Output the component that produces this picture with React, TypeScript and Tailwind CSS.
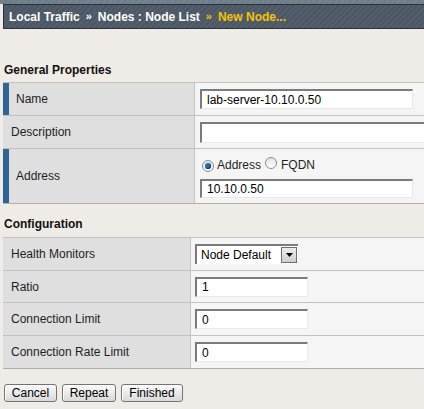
import React from "react";

// инпут в стиле старого BIG-IP: вдавленная рамка сверху/слева
const Field = ({ value, w, h = 20 }: { value: string; w: string; h?: number }) => (
  <input
    readOnly
    value={value}
    style={{ height: h }}
    className={`${w} shrink-0 bg-white border-t-2 border-l-2 border-t-[#7b7b7b] border-l-[#7b7b7b] border-r border-b border-r-[#e9e9e9] border-b-[#e9e9e9] pl-[5px] text-[12px] text-black outline-none font-['Liberation_Sans',Arial,sans-serif]`}
  />
);

const Radio = ({ checked }: { checked?: boolean }) => (
  <span className="relative inline-flex h-[12px] w-[12px] shrink-0 items-center justify-center rounded-full border border-[#8c8c8c] bg-linear-to-b from-[#e4e4e4] to-[#ffffff]">
    {checked && (
      <span className="h-[6px] w-[6px] rounded-full bg-[#1f6fb8] shadow-[inset_-1px_-1px_1px_#0c3f72]" />
    )}
  </span>
);

const Label = ({ text, bar }: { text: string; bar?: boolean }) => (
  <div className="flex h-full items-center border-r border-[#c3c3c3] bg-[#dfdfdf]">
    {bar ? <div className="h-full w-[6px] bg-[#2f6497]" /> : null}
    <span className={`text-[12px] text-[#1e1e1e] ${bar ? "pl-[7px]" : "pl-[8px]"}`}>{text}</span>
  </div>
);

const Btn = ({ text, w }: { text: string; w: string }) => (
  <button
    type="button"
    className={`${w} h-[18px] rounded-[3px] border border-[#747474] bg-linear-to-b from-[#fbfbfb] to-[#d9d9d9] shadow-[inset_1px_1px_0_#ffffff] text-[12px] leading-none text-black`}
  >
    {text}
  </button>
);

export default function App() {
  return (
    <div className="h-[409px] w-[424px] overflow-hidden bg-[#efebe7] font-['Liberation_Sans',Arial,sans-serif]">
      {/* шапка с хлебными крошками */}
      <div className="h-[4px] bg-[repeating-linear-gradient(135deg,#6d7c88_0px,#6d7c88_2px,#75848f_2px,#75848f_4px)]" />
      <div className="ml-[3px] flex h-[25px] items-center border border-r-0 border-[#2c3038] bg-[repeating-linear-gradient(135deg,#4c5765_0px,#4c5765_2px,#535f6c_2px,#535f6c_4px)] pl-[5px] text-[12px] font-bold">
        <span className="text-white">Local Traffic</span>
        <span className="mx-[6px] text-[11px] text-white">»</span>
        <span className="text-white">Nodes : Node List</span>
        <span className="mx-[6px] text-[11px] text-[#f6c400]">»</span>
        <span className="text-[#f6c400]">New Node...</span>
      </div>

      {/* General Properties */}
      <div className="flex h-[53px] items-end pb-[3px] pl-[4px] text-[12px] font-bold text-[#111]">General Properties</div>
      <div className="ml-[3px] border-t border-[#c3c3c3]">
        <div className="grid h-[33px] grid-cols-[192px_1fr] border-b border-[#c3c3c3]">
          <Label text="Name" bar />
          <div className="flex items-center overflow-hidden bg-[#f5f5f5] pl-[5px]">
            <Field value="lab-server-10.10.0.50" w="w-[213px]" />
          </div>
        </div>
        <div className="grid h-[33px] grid-cols-[192px_1fr] border-b border-[#c3c3c3]">
          <Label text="Description" />
          <div className="flex items-center overflow-hidden bg-[#f5f5f5] pl-[5px]">
            <Field value="" w="w-[240px]" h={21} />
          </div>
        </div>
        <div className="grid h-[55px] grid-cols-[192px_1fr] border-b border-[#aeaeae]">
          <Label text="Address" bar />
          <div className="flex flex-col overflow-hidden bg-[#f5f5f5] pl-[5px] pt-[9px]">
            <div className="flex h-[13px] items-center text-[12px] text-[#1e1e1e]">
              <span className="ml-[2px]"><Radio checked /></span>
              <span className="ml-[3px]">Address</span>
              <span className="ml-[4px]"><Radio /></span>
              <span className="ml-[4px]">FQDN</span>
            </div>
            <div className="mt-[5px]">
              <Field value="10.10.0.50" w="w-[213px]" h={19} />
            </div>
          </div>
        </div>
      </div>

      {/* Configuration */}
      <div className="flex h-[33px] items-end pb-[4px] pl-[4px] text-[12px] font-bold text-[#111]">Configuration</div>
      <div className="ml-[3px] border-t border-[#c3c3c3]">
        <div className="grid h-[33px] grid-cols-[188px_1fr] border-b border-[#c3c3c3]">
          <Label text="Health Monitors" />
          <div className="flex items-center bg-[#f5f5f5] pl-[4px]">
            <div className="flex h-[20px] w-[103px] items-center justify-between border-t-2 border-l-2 border-t-[#7b7b7b] border-l-[#7b7b7b] bg-white pl-[4px] pr-[1px] text-[12px] text-black">
              <span>Node Default</span>
              <span className="flex h-[16px] w-[16px] items-center justify-center border border-[#6f6f6f] bg-linear-to-b from-[#ececec] to-[#cfcfcf]">
                <svg width="7" height="4" viewBox="0 0 7 4"><path d="M0 0h7L3.5 4z" fill="#000" /></svg>
              </span>
            </div>
          </div>
        </div>
        <div className="grid h-[32px] grid-cols-[188px_1fr] border-b border-[#c3c3c3]">
          <Label text="Ratio" />
          <div className="flex items-center bg-[#f5f5f5] pl-[4px]">
            <Field value="1" w="w-[113px]" />
          </div>
        </div>
        <div className="grid h-[33px] grid-cols-[188px_1fr] border-b border-[#c3c3c3]">
          <Label text="Connection Limit" />
          <div className="flex items-center bg-[#f5f5f5] pl-[4px]">
            <Field value="0" w="w-[113px]" />
          </div>
        </div>
        <div className="grid h-[33px] grid-cols-[188px_1fr] border-b border-[#aeaeae]">
          <Label text="Connection Rate Limit" />
          <div className="flex items-center bg-[#f5f5f5] pl-[4px]">
            <Field value="0" w="w-[113px]" />
          </div>
        </div>
      </div>

      <div className="ml-[4px] mt-[15px] flex gap-[5px]">
        <Btn text="Cancel" w="w-[53px]" />
        <Btn text="Repeat" w="w-[54px]" />
        <Btn text="Finished" w="w-[62px]" />
      </div>
    </div>
  );
}
